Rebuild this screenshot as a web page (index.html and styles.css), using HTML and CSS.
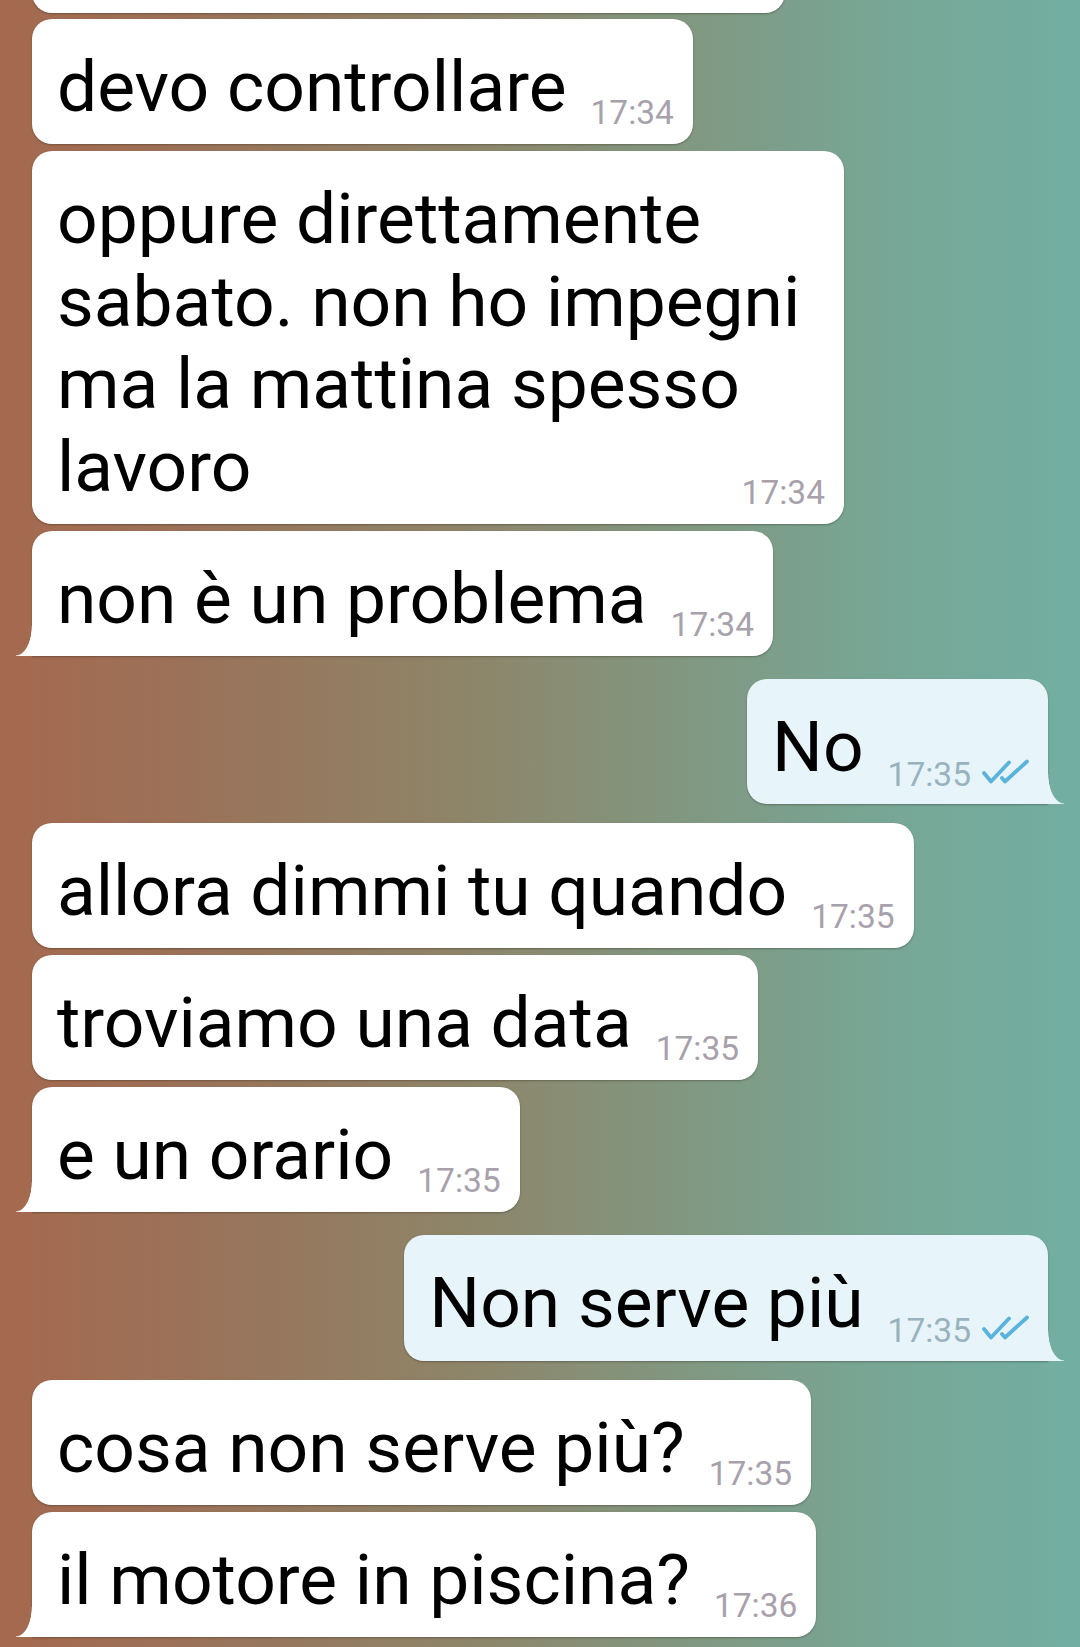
FILE: index.html
```html
<!DOCTYPE html>
<html lang="it">
<head>
<meta charset="utf-8">
<title>Chat</title>
<link rel="stylesheet" href="styles.css">
</head>
<body>
<div class="chat">
  <div class="row in first"><div class="bubble partial"></div></div>

  <div class="row in second"><div class="bubble"><span class="text">devo controllare</span><span class="meta"><span class="time">17:34</span></span></div></div>

  <div class="row in"><div class="bubble wide"><span class="text">oppure direttamente<br>sabato. non ho impegni<br>ma la mattina spesso<br>lavoro</span><span class="meta"><span class="time">17:34</span></span></div></div>

  <div class="row in"><div class="bubble tail-l"><span class="text">non è un problema</span><span class="meta"><span class="time">17:34</span></span></div></div>

  <div class="row out switch-out"><div class="bubble own tail-r"><span class="text">No</span><span class="meta"><span class="time">17:35</span><svg class="check" viewBox="0 0 48 26" width="48" height="26"><path d="M3 14 L10 22.5 L28 3.5 M21 19 L24 22.5 L46 2.5" fill="none" stroke="#5ab3da" stroke-width="3.8" stroke-linecap="round" stroke-linejoin="round"/></svg></span></div></div>

  <div class="row in switch-in"><div class="bubble"><span class="text">allora dimmi tu quando</span><span class="meta"><span class="time">17:35</span></span></div></div>

  <div class="row in"><div class="bubble"><span class="text">troviamo una data</span><span class="meta"><span class="time">17:35</span></span></div></div>

  <div class="row in"><div class="bubble tail-l"><span class="text">e un orario</span><span class="meta"><span class="time">17:35</span></span></div></div>

  <div class="row out switch-out"><div class="bubble own tail-r"><span class="text">Non serve più</span><span class="meta"><span class="time">17:35</span><svg class="check" viewBox="0 0 48 26" width="48" height="26"><path d="M3 14 L10 22.5 L28 3.5 M21 19 L24 22.5 L46 2.5" fill="none" stroke="#5ab3da" stroke-width="3.8" stroke-linecap="round" stroke-linejoin="round"/></svg></span></div></div>

  <div class="row in switch-in"><div class="bubble"><span class="text">cosa non serve più?</span><span class="meta"><span class="time">17:35</span></span></div></div>

  <div class="row in"><div class="bubble tail-l"><span class="text">il motore in piscina?</span><span class="meta"><span class="time">17:36</span></span></div></div>
</div>
</body>
</html>
```

FILE: styles.css
```css
html, body {
  margin: 0;
  padding: 0;
}

body {
  width: 1080px;
  height: 1647px;
  overflow: hidden;
  background: linear-gradient(90deg, #a5694f 0%, #9a7259 18%, #8e8468 42%, #82967f 62%, #78a594 80%, #72afa2 100%);
  font-family: Roboto, "Noto Sans", "Liberation Sans", sans-serif;
}

.chat {
  display: flex;
  flex-direction: column;
  padding: 0 32px;
}

.row {
  display: flex;
  margin-top: 7px;
}

.row.in { justify-content: flex-start; }
.row.out { justify-content: flex-end; }
.row.first { margin-top: -47px; }
.row.second { margin-top: 6px; }
.row.switch-out { margin-top: 23px; }
.row.switch-in { margin-top: 19px; }

.bubble {
  position: relative;
  background: #ffffff;
  border-radius: 20px;
  padding: 27px 19px 15.33px 25px;
  font-size: 71.3px;
  line-height: 82.67px;
  color: #000000;
  box-shadow: 0 1px 2px rgba(40, 30, 20, 0.35);
  max-width: 940px;
}

.bubble.partial {
  width: 753px;
  height: 60px;
  padding: 0;
  box-sizing: border-box;
}

.bubble.wide {
  width: 812px;
  box-sizing: border-box;
}

.bubble.own {
  background: #e7f5fb;
}

.bubble.tail-l {
  border-bottom-left-radius: 0;
}

.bubble.tail-l::before {
  content: "";
  position: absolute;
  left: -16px;
  bottom: 0;
  width: 16px;
  height: 30px;
  background: radial-gradient(ellipse 16px 30px at 0 0, rgba(255,255,255,0) 96%, #ffffff 100%);
}

.bubble.tail-r {
  border-bottom-right-radius: 0;
}

.bubble.tail-r::after {
  content: "";
  position: absolute;
  right: -16px;
  bottom: 0;
  width: 16px;
  height: 30px;
  background: radial-gradient(ellipse 16px 30px at 100% 0, rgba(231,245,251,0) 96%, #e7f5fb 100%);
}

.text {
  white-space: nowrap;
}

.meta {
  float: right;
  margin: 53px 0 0 24px;
  font-size: 33.5px;
  line-height: 28px;
  color: #a8a1ac;
  white-space: nowrap;
}

.own .meta {
  color: #98b3be;
}

.check {
  display: inline-block;
  vertical-align: 1px;
  margin-left: 10px;
}
```
